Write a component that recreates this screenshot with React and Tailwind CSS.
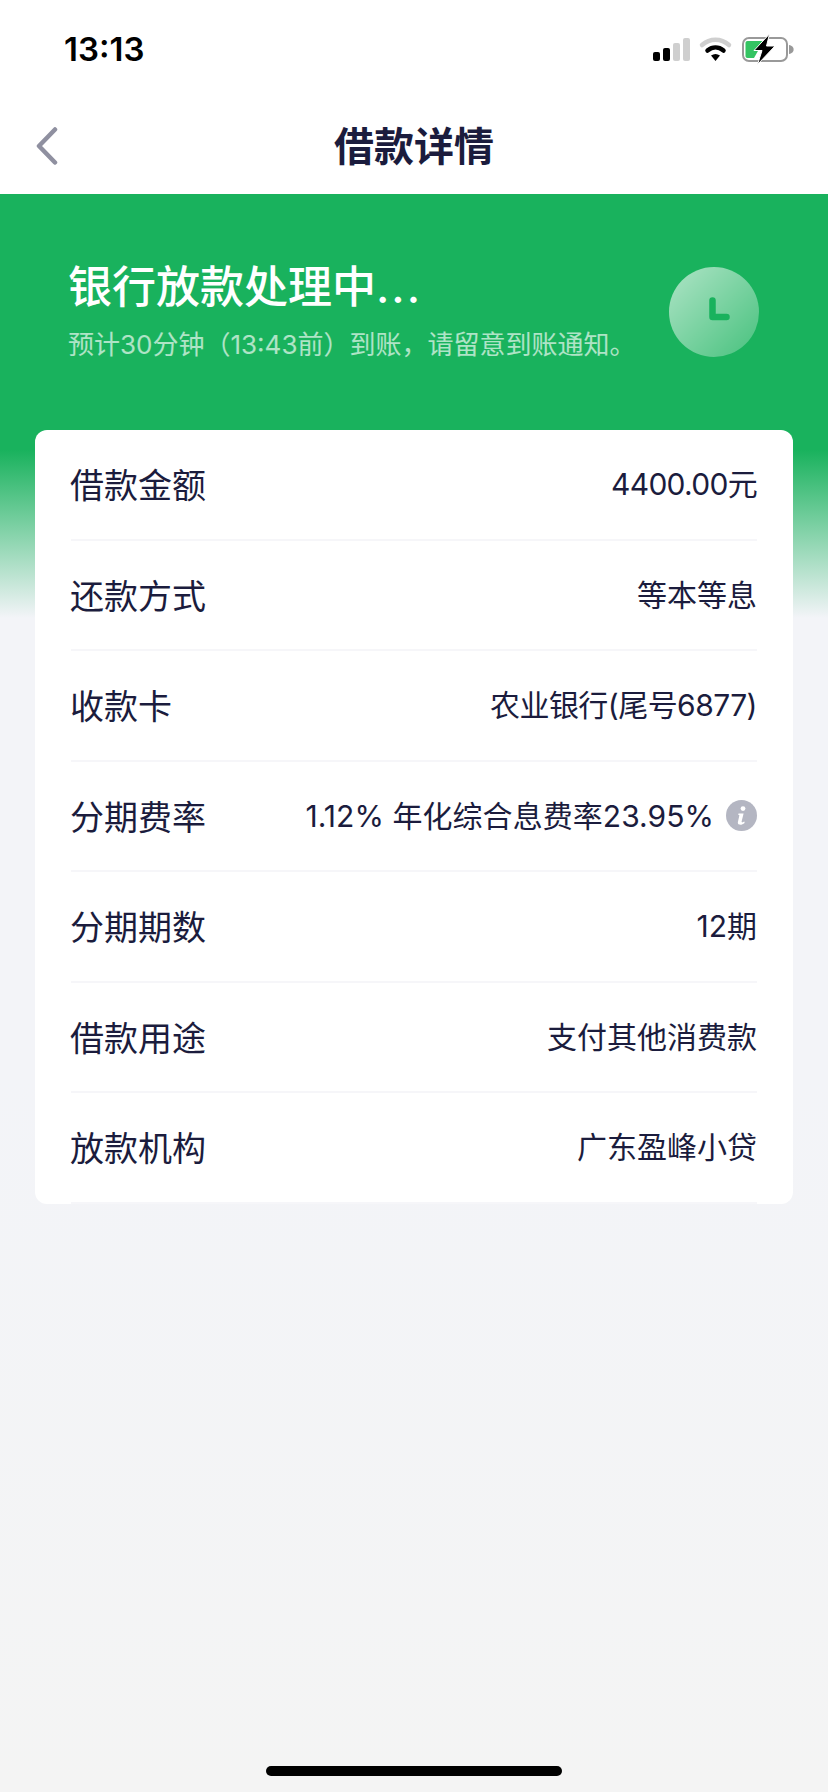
import React from 'react';

const rows = [
  { label: '借款金额', value: '4400.00元', className: 'tracking-[-0.7px]' },
  { label: '还款方式', value: '等本等息' },
  { label: '收款卡', value: '农业银行(尾号6877)', className: 'tracking-[-0.55px]' },
  { label: '分期费率', value: '1.12% 年化综合息费率23.95%', className: 'tracking-[0.05px]', info: true },
  { label: '分期期数', value: '12期' },
  { label: '借款用途', value: '支付其他消费款' },
  { label: '放款机构', value: '广东盈峰小贷' },
];

const StatusIcons = () => (
  <svg width="146" height="32" viewBox="0 0 146 32" fill="none">
    <rect x="3" y="19" width="7" height="9" rx="2" fill="#000" />
    <rect x="13" y="15" width="7" height="13" rx="2" fill="#000" />
    <rect x="23" y="10" width="7" height="18" rx="2" fill="#cfcfcf" />
    <rect x="33" y="5" width="7" height="23" rx="2" fill="#cfcfcf" />
    <path d="M52 12C60 5 71 5 79 12" stroke="#cfcfcf" strokeWidth="4.5" strokeLinecap="round" />
    <path d="M57.5 17.5C62.5 13.5 68.5 13.5 73.5 17.5" stroke="#000" strokeWidth="4.5" strokeLinecap="round" />
    <path d="M61 22.5C64 20.5 67 20.5 70 22.5L65.5 28Z" fill="#000" />
    <rect x="93" y="5" width="44" height="23" rx="6" stroke="#999" strokeWidth="2" />
    <path d="M139 12C142.5 12.6 143.6 14.6 143.6 16.5C143.6 18.4 142.5 20.4 139 21Z" fill="#999" />
    <path d="M97.5 8H113.5L104 25H97.5C96.2 25 95.5 24.3 95.5 23V10C95.5 8.7 96.2 8 97.5 8Z" fill="#34c462" />
    <path d="M119.5 1L104 17.5H112L107.5 31.5L125 13H116.5Z" fill="#000" stroke="#fff" strokeWidth="1" />
  </svg>
);

const ClockBadge = () => (
  <div className="flex h-[90px] w-[90px] shrink-0 items-center justify-center rounded-full bg-gradient-to-br from-white/65 to-white/20">
    <svg width="90" height="90" viewBox="0 0 90 90" fill="none">
      <path d="M43.5 33.5V50H57.5" stroke="#19b25d" strokeWidth="6.5" strokeLinecap="round" strokeLinejoin="round" />
    </svg>
  </div>
);

const InfoIcon = () => (
  <svg width="31" height="31" viewBox="0 0 31 31" className="shrink-0">
    <circle cx="15.5" cy="15.5" r="15.5" fill="#b4b6c2" />
    <circle cx="17" cy="8.6" r="2.4" fill="#fff" />
    <path d="M12.5 13.5H17.6L15.6 21.6C15.4 22.5 16.3 22.8 18.4 21.6L18.6 23C16.6 24.6 14.9 25 13.2 24.6C12 24.2 11.6 23.2 11.9 22L13.4 15.2L12.2 14.8Z" fill="#fff" />
  </svg>
);

export default function App() {
  return (
    <div className="flex h-[1792px] w-[828px] flex-col overflow-hidden bg-[linear-gradient(to_bottom,#f3f4f8_60%,#f4f4f4_100%)] font-['Inter','Noto_Sans_CJK_SC',sans-serif] text-[#1b1c3d]">
      <div className="bg-white">
        <div className="flex h-[88px] items-center justify-between pl-16 pr-8 pt-[10px]">
          <span className="text-[33px] font-semibold leading-none text-black">13:13</span>
          <StatusIcons />
        </div>
        <div className="relative flex h-[106px] items-center justify-center pt-3">
          <svg width="24" height="38" viewBox="0 0 24 38" fill="none" className="absolute left-[35px] top-[39px]">
            <path d="M20 2.5L4 19L20 35.5" stroke="#8f90a0" strokeWidth="4.5" strokeLinecap="round" strokeLinejoin="round" />
          </svg>
          <h1 className="text-[40px] font-bold leading-none">借款详情</h1>
        </div>
      </div>

      <div className="h-[424px] bg-[linear-gradient(to_bottom,#19b25d_60.4%,#f3f4f8_100%)] px-[69px] pt-[70px]">
        <div className="flex items-start justify-between">
          <div className="-ml-px">
            <h2 className="text-[44px] font-medium leading-[46px] text-white">
              银行放款处理中<span className="tracking-[2px]">...</span>
            </h2>
            <p className="mt-5 text-[26px] leading-[30px] text-white/65">预计30分钟（13:43前）到账，请留意到账通知。</p>
          </div>
          <div className="mt-[3px]">
            <ClockBadge />
          </div>
        </div>
      </div>

      <div className="mx-[35px] -mt-[188px] rounded-xl bg-white px-9">
        {rows.map((row) => (
          <div key={row.label} className="flex h-[110.5px] items-center justify-between border-b-2 border-[#f6f6f9]">
            <span className="-ml-px mt-1 text-[34px] leading-none">{row.label}</span>
            <span className={`flex items-center gap-3 text-[30px] leading-none ${row.className || ''}`}>
              {row.value}
              {row.info && <InfoIcon />}
            </span>
          </div>
        ))}
      </div>

      <div className="mt-auto flex justify-center pb-4">
        <div className="h-[10px] w-[296px] rounded-full bg-black" />
      </div>
    </div>
  );
}
